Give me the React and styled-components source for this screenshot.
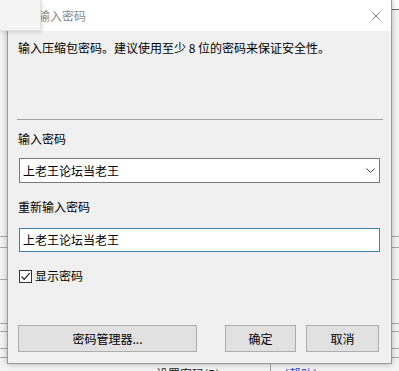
import React from "react"
import styled, { createGlobalStyle } from "styled-components"

const GlobalStyle = createGlobalStyle`
    html, body { margin: 0; padding: 0; }
    body {
        font-family: "Noto Sans CJK SC", "Noto Sans", "Liberation Sans", sans-serif;
        font-size: 12px; color: #000;
    }
`

// background window rows (y of each line)
const bgLines = [227, 238, 270, 314, 322, 339, 348]

export default function App(){
    let last = 0;
    return(
        <>
            <GlobalStyle />
            <Desktop>
                <Backdrop>
                    <BgTitle />
                    {bgLines.map((y, i) => {
                        const h = y - last;
                        last = y;
                        return <BgRow key={i} style={{ height: h }} />
                    })}
                    <BgFooter>
                        <span>设置密码(P)...</span>
                        <Divider />
                        <HelpLink>[帮助]</HelpLink>
                    </BgFooter>
                </Backdrop>

                <Popup />

                <Dialog>
                    <TitleBar>
                        <Title>输入密码</Title>
                        <CloseBtn>
                            <svg width="10" height="10" viewBox="0 0 10 10">
                                <path d="M0.5 0.5 L9.5 9.5 M9.5 0.5 L0.5 9.5" stroke="#8a8a8a" strokeWidth="1" fill="none" />
                            </svg>
                        </CloseBtn>
                    </TitleBar>
                    <Body>
                        <Desc>输入压缩包密码。建议使用至少 8 位的密码来保证安全性。</Desc>
                        <Separator />
                        <Label $top={11}>输入密码</Label>
                        <Combo>
                            <span>上老王论坛当老王</span>
                            <svg width="9" height="5" viewBox="0 0 9 5">
                                <path d="M0.5 0.5 L4.5 4.5 L8.5 0.5" stroke="#444" strokeWidth="1" fill="none" />
                            </svg>
                        </Combo>
                        <Label $top={16}>重新输入密码</Label>
                        <TextInput>上老王论坛当老王</TextInput>
                        <CheckRow>
                            <CheckBox>
                                <svg width="11" height="11" viewBox="0 0 11 11">
                                    <path d="M1.5 5.5 L4.2 8.3 L9.6 2.2" stroke="#222" strokeWidth="1.2" fill="none" />
                                </svg>
                            </CheckBox>
                            <span>显示密码</span>
                        </CheckRow>
                        <ButtonRow>
                            <Button $w={179}>密码管理器...</Button>
                            <Spacer />
                            <Button $w={71}>确定</Button>
                            <Button $w={73}>取消</Button>
                        </ButtonRow>
                    </Body>
                </Dialog>
            </Desktop>
        </>
    )
}

const Desktop = styled.div`
    position: relative;
    width: 399px; height: 371px; overflow: hidden;
    background: #f0f0f0;
`
const Backdrop = styled.div`
    display: flex; flex-direction: column;
    width: 100%; height: 100%;
    background: #f3f3f3;
`
const BgTitle = styled.div`
    height: 9px; flex-shrink: 0;
    border-bottom: 1px solid #6a6a6a;
    background: #fff;
`
const BgRow = styled.div`
    flex-shrink: 0; box-sizing: border-box;
    border-bottom: 1px solid #a8a8a8;
`
const BgFooter = styled.div`
    display: flex; align-items: flex-start; gap: 40px;
    padding: 8px 0 0 156px; height: 20px;
    font-size: 12px; color: #222; line-height: 16px;
`
const Divider = styled.div`
    width: 1px; height: 20px; background: #a0a0a0; margin-top: -8px;
`
const HelpLink = styled.span`
    color: #2a3fd0; margin-left: -26px;
`
const Popup = styled.div`
    position: absolute; left: 0; top: 0; z-index: 3;
    width: 40px; height: 30px;
    background: #f4f4f4;
    border-right: 1px solid #e0e0e0; border-bottom: 1px solid #e0e0e0;
    box-shadow: 1px 1px 4px rgba(0,0,0,0.15);
`
const Dialog = styled.div`
    position: absolute; left: 7px; top: 0; z-index: 2;
    width: 385px; height: 364px; box-sizing: border-box;
    display: flex; flex-direction: column;
    background: #f0f0f0;
    border: 1px solid #9a9a9a; border-top: none;
    box-shadow: 0 0 6px rgba(0,0,0,0.28);
`
const TitleBar = styled.div`
    display: flex; align-items: center; justify-content: space-between;
    height: 31px; flex-shrink: 0;
    background: #fff;
    padding: 0 10px 0 30px;
`
const Title = styled.div`
    color: #8a8a8a; font-size: 12px;
`
const CloseBtn = styled.div`
    display: flex; align-items: center; justify-content: center;
    width: 10px; height: 10px;
`
const Body = styled.div`
    flex: 1; display: flex; flex-direction: column;
    padding: 0 8px 11px 9px;
    line-height: 16px;
`
const Desc = styled.div`
    margin-top: 9px; padding-left: 1px;
`
const Separator = styled.div`
    margin-top: 63px; height: 1px; background: #a0a0a0;
`
const Label = styled.div`
    margin-top: ${p => p.$top}px; padding-left: 1px;
`
const Combo = styled.div`
    display: flex; align-items: center; justify-content: space-between;
    margin: 11px 3px 0 2px; height: 25px; box-sizing: border-box;
    padding: 0 4px 0 3px;
    background: #fff; border: 1px solid #7a7a7a;
`
const TextInput = styled.div`
    display: flex; align-items: center;
    margin: 13px 3px 0 2px; height: 24px; box-sizing: border-box;
    padding: 0 3px;
    background: #fff; border: 1px solid #3f7db3;
`
const CheckRow = styled.div`
    display: flex; align-items: center; gap: 3px;
    margin: 16px 0 0 2px; height: 16px;
`
const CheckBox = styled.div`
    display: flex; align-items: center; justify-content: center;
    width: 13px; height: 13px; box-sizing: border-box;
    border: 1px solid #333; background: #fff;
`
const ButtonRow = styled.div`
    display: flex; gap: 10px;
    margin: auto 4px 0 1px;
`
const Spacer = styled.div` flex: 1; `
const Button = styled.div`
    display: flex; align-items: center; justify-content: center;
    width: ${p => p.$w}px; height: 27px; box-sizing: border-box;
    background: #e1e1e1; border: 1px solid #adadad;
`
